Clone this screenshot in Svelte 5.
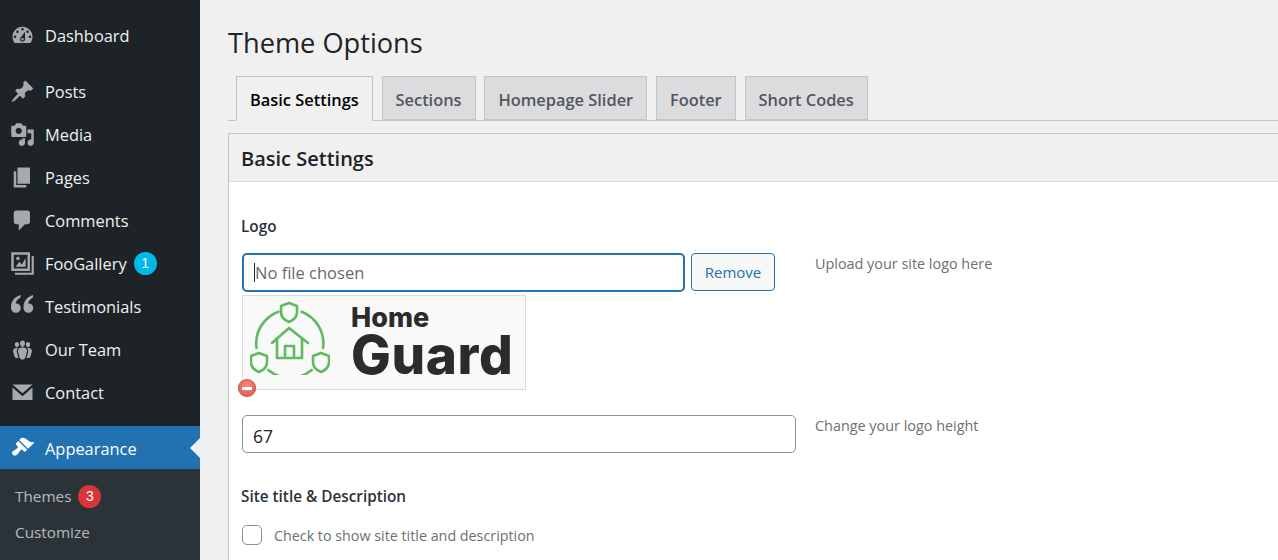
<script>
  const icons = {
    dashboard: "M3.76 16h12.48c1.1-1.37 1.76-3.11 1.76-5 0-4.42-3.58-8-8-8s-8 3.58-8 8c0 1.89.66 3.63 1.76 5zM10 4c.55 0 1 .45 1 1s-.45 1-1 1-1-.45-1-1 .45-1 1-1zM6 6c.55 0 1 .45 1 1s-.45 1-1 1-1-.45-1-1 .45-1 1-1zm8 0c.55 0 1 .45 1 1s-.45 1-1 1-1-.45-1-1 .45-1 1-1zm-5.37 5.55L12 7v6c0 1.1-.9 2-2 2s-2-.9-2-2c0-.57.24-1.08.63-1.45zM4 10c.55 0 1 .45 1 1s-.45 1-1 1-1-.45-1-1 .45-1 1-1zm12 0c.55 0 1 .45 1 1s-.45 1-1 1-1-.45-1-1 .45-1 1-1zm-5 3c0-.55-.45-1-1-1s-1 .45-1 1 .45 1 1 1 1-.45 1-1z",
    posts: "M10.44 3.02l1.82-1.82 6.36 6.35-1.83 1.82c-1.05-.68-2.48-.57-3.41.36l-.75.75c-.92.93-1.04 2.35-.35 3.41l-1.83 1.82-2.41-2.41-2.8 2.79c-.42.42-3.38 2.71-3.8 2.29s1.86-3.39 2.28-3.81l2.79-2.79L4.1 9.36l1.83-1.82c1.05.69 2.48.57 3.4-.36l.75-.75c.93-.92 1.05-2.35.36-3.41z",
    media: "M13 11V4c0-.55-.45-1-1-1h-1.67L9 1H5L3.67 3H2c-.55 0-1 .45-1 1v7c0 .55.45 1 1 1h10c.55 0 1-.45 1-1zM7 4.5c1.38 0 2.5 1.12 2.5 2.5S8.38 9.5 7 9.5 4.5 8.38 4.5 7 5.62 4.5 7 4.5zM14 6h5v10.5c0 1.38-1.12 2.5-2.5 2.5S14 17.88 14 16.5s1.12-2.5 2.5-2.5c.17 0 .34.02.5.05V9h-3V6zm-4 8.05V13h2v3.5c0 1.38-1.12 2.5-2.5 2.5S7 17.88 7 16.5 8.12 14 9.5 14c.17 0 .34.02.5.05z",
    pages: "M6 15V2h10v13H6zm-1 1h8v2H3V5h2v11z",
    comments: "M5 2h9c1.1 0 2 .9 2 2v7c0 1.1-.9 2-2 2h-2l-5 5v-5H5c-1.1 0-2-.9-2-2V4c0-1.1.9-2 2-2z",
    gallery: "M1 1h15v15H1V1zm2 2v11h11V3H3zM4.500 12.500l3-4 2 2.200 3-5.200v7H4.500zM6.300 4.500a1.400 1.400 0 1 1 0 2.800 1.400 1.400 0 0 1 0-2.800zM17.300 4H19v15H4v-1.700h13.300V4z",
    quotes: "M8.500.8C4 2 .8 5.500.8 10.500c0 2.800 1.800 4.500 4 4.500 2.200 0 3.800-1.700 3.800-3.800 0-2.100-1.500-3.600-3.400-3.600-.3 0-.6 0-.8.1.5-2.300 1.900-3.800 4-4.900zM18.500.8C14 2 10.800 5.500 10.800 10.500c0 2.800 1.800 4.500 4 4.500 2.200 0 3.800-1.700 3.800-3.800 0-2.100-1.500-3.600-3.400-3.600-.3 0-.6 0-.8.1.5-2.300 1.900-3.800 4-4.900z",
    team: "M8.03 4.46c-.29 1.28.55 3.46 1.97 3.46 1.41 0 2.25-2.18 1.96-3.46-.22-.98-1.08-1.63-1.96-1.63-.89 0-1.74.65-1.97 1.63zm-4.13.9c-.25 1.08.47 2.93 1.67 2.93s1.92-1.85 1.67-2.93c-.19-.83-.92-1.39-1.67-1.39s-1.48.56-1.67 1.39zm8.86 0c-.25 1.08.47 2.93 1.66 2.93 1.2 0 1.92-1.85 1.67-2.93-.19-.83-.92-1.39-1.67-1.39-.74 0-1.47.56-1.66 1.39zm-.59 11.43l1.25-4.3C14.2 10 12.71 8.47 10 8.47c-2.72 0-4.21 1.53-3.44 4.02l1.26 4.3C8.05 17.51 9 18 10 18c.98 0 1.94-.49 2.17-1.21zm-6.1-7.63c-.49.67-.96 1.83-.42 3.59l1.12 3.79c-.34.2-.77.31-1.2.31-.85 0-1.65-.41-1.85-1.03l-1.07-3.65c-.65-2.11.61-3.4 2.92-3.4.27 0 .54.02.79.06-.1.1-.2.22-.29.33zm8.35-.39c2.31 0 3.58 1.29 2.92 3.4l-1.07 3.65c-.2.62-1 1.03-1.85 1.03-.43 0-.86-.11-1.2-.31l1.11-3.77c.55-1.78.08-2.94-.42-3.61-.08-.11-.18-.23-.28-.33.25-.04.51-.06.79-.06z",
    contact: "M2 3.500h16L10 10.500 2 3.500zm0 2.500v10h16V6l-8 7-8-7z",
    appearance: "M14.48 11.06L7.41 3.99l1.5-1.5c.5-.56 2.3-.47 3.51.32 1.21.8 1.43 1.28 2.91 2.1 1.18.64 2.45 1.26 4.45.85zm-.71.71L6.7 4.7 4.93 6.47c-.39.39-.39 1.02 0 1.41l1.06 1.06c.39.39.39 1.03 0 1.42-.6.6-1.43 1.11-2.21 1.69-.35.26-.7.53-1.01.84C1.43 13.23.98 14.4 2.27 15.7c1.29 1.3 2.52.86 3.85-.45.31-.31.58-.66.84-1.01.58-.78 1.09-1.61 1.69-2.21.39-.39 1.03-.39 1.42 0l1.06 1.06c.39.39 1.02.39 1.41 0z"
  };

  const menu = [
    [{ label: "Dashboard", icon: "dashboard" }],
    [
      { label: "Posts", icon: "posts" },
      { label: "Media", icon: "media" },
      { label: "Pages", icon: "pages" },
      { label: "Comments", icon: "comments" },
      { label: "FooGallery", icon: "gallery", badge: 1 },
      { label: "Testimonials", icon: "quotes" },
      { label: "Our Team", icon: "team" },
      { label: "Contact", icon: "contact" }
    ]
  ];

  const tabs = ["Basic Settings", "Sections", "Homepage Slider", "Footer", "Short Codes"];
  const shield = "l8 3v6c0 5-3 8-8 10-5-2-8-5-8-10V";
</script>

<div class="page">
  <aside>
    {#each menu as group}
      <ul>
        {#each group as item}
          <li>
            <svg viewBox="0 0 20 20"><path d={icons[item.icon]} /></svg>
            <span>{item.label}</span>
            {#if item.badge}<b class="count blue">{item.badge}</b>{/if}
          </li>
        {/each}
      </ul>
    {/each}
    <div class="current">
      <svg viewBox="0 0 20 20"><path d={icons.appearance} /></svg>
      <span>Appearance</span>
    </div>
    <ul class="sub">
      <li><span>Themes</span><b class="count red">3</b></li>
      <li>Customize</li>
    </ul>
  </aside>

  <main>
    <h1>Theme Options</h1>
    <nav>
      {#each tabs as tab, i}
        <div class="tab" class:active={i === 0}>{tab}</div>
      {/each}
    </nav>

    <section class="card">
      <h2>Basic Settings</h2>
      <div class="body">
        <h4>Logo</h4>
        <div class="row">
          <div class="field">
            <div class="upload">
              <div class="file"><i></i>No file chosen</div>
              <button>Remove</button>
            </div>
            <div class="preview">
              <svg class="emblem" viewBox="0 0 80 74" fill="none" stroke="#5fba5f" stroke-width="2.600" stroke-linecap="round" stroke-linejoin="round">
                <path d="M51.700 10.700A34 34 0 0 1 73 47M61.700 69A34 34 0 0 1 18.300 69M6.500 47A34 34 0 0 1 28.300 10.700" />
                <path d={"M39 2" + shield + "5z"} />
                <path d={"M9 52" + shield + "55z"} />
                <path d={"M71 52" + shield + "55z"} />
                <path d="M22 42l17-15 19 15M27 38v19h25V38M35 57V45h9v12" />
              </svg>
              <div class="brand">
                <span class="home">Home</span>
                <span class="guard">Guard</span>
              </div>
              <span class="del"></span>
            </div>
          </div>
          <p>Upload your site logo here</p>
        </div>

        <div class="row height">
          <div class="number">67</div>
          <p>Change your logo height</p>
        </div>

        <h4 class="site">Site title &amp; Description</h4>
        <label><span class="check"></span>Check to show site title and description</label>
      </div>
    </section>
  </main>
</div>

<style>
  :global(body) {
    margin: 0;
    overflow: hidden;
    background: #f0f0f1;
  }

  .page {
    display: flex;
    width: 1278px;
    height: 560px;
    overflow: hidden;
    font-family: "Open Sans", "Noto Sans", sans-serif;
    color: #1d2327;
  }

  aside {
    flex: 0 0 200px;
    background: #1d2327;
    padding-top: 14px;
    color: #f0f0f1;
    font-size: 16.400px;
  }

  ul {
    list-style: none;
    margin: 0 0 13px;
    padding: 0;
  }

  ul + ul {
    margin-bottom: 12px;
  }

  li,
  .current {
    display: flex;
    align-items: center;
    height: 43px;
    padding-left: 10px;
  }

  aside svg {
    flex: none;
    width: 25px;
    height: 25px;
    margin-right: 10px;
    fill: #a7aaad;
    fill-rule: evenodd;
  }

  .count {
    display: inline-block;
    width: 23px;
    height: 23px;
    margin-left: 7px;
    border-radius: 50%;
    color: #fff;
    font: 400 14px/23px "Liberation Sans", sans-serif;
    text-align: center;
  }

  .blue {
    background: #00b9eb;
  }

  .red {
    background: #d63638;
  }

  .current {
    position: relative;
    background: #2271b1;
    color: #fff;
  }

  .current span {
    padding-top: 2px;
  }

  .current svg {
    fill: #fff;
  }

  .current::after {
    content: "";
    position: absolute;
    right: 0;
    top: 12px;
    border: 10px solid transparent;
    border-right-color: #f0f0f1;
    border-left: 0;
  }

  ul.sub {
    margin: 0;
    padding: 9px 0;
    background: #2c3338;
    height: 91px;
    box-sizing: border-box;
    color: rgba(240, 246, 252, 0.7);
    font-size: 15.300px;
  }

  .sub li {
    height: 36px;
    padding-left: 15px;
  }

  main {
    flex: 1;
    min-width: 0;
    padding-left: 28px;
  }

  h1 {
    margin: 24px 0 15px;
    font-size: 27.200px;
    font-weight: 400;
    line-height: 37px;
  }

  nav {
    display: flex;
    gap: 8.800px;
    height: 44px;
    padding-left: 8px;
    border-bottom: 1px solid #c3c4c7;
  }

  .tab {
    box-sizing: border-box;
    padding: 0 13px;
    height: 44px;
    border: 1px solid #c3c4c7;
    background: #dcdcde;
    color: #50575e;
    font-size: 16.400px;
    font-weight: 600;
    line-height: 45px;
  }

  .tab.active {
    height: 45px;
    background: #f0f0f1;
    border-bottom-color: #f0f0f1;
    color: #000;
  }

  .card {
    width: 1100px;
    height: 460px;
    margin-top: 12px;
    border: 1px solid #c3c4c7;
    background: #fff;
  }

  h2 {
    margin: 0;
    height: 47px;
    padding-left: 12px;
    border-bottom: 1px solid #dcdcde;
    background: #f0f0f1;
    font-size: 20px;
    font-weight: 600;
    line-height: 49px;
  }

  .body {
    padding: 0 13px;
  }

  h4 {
    margin: 0 0 0 -1px;
    padding-top: 34px;
    font-size: 15.300px;
    font-weight: 600;
    line-height: 20px;
    color: #2c3338;
  }

  .row {
    display: flex;
    align-items: flex-start;
    margin-top: 17px;
  }

  .field {
    flex: 0 0 573px;
  }

  .row p {
    margin: 0;
    padding-top: 1px;
    font-size: 14.400px;
    line-height: 20px;
    color: #6b7075;
  }

  .upload {
    display: flex;
    gap: 6px;
  }

  .file {
    flex: 0 0 443px;
    height: 39px;
    box-sizing: border-box;
    display: flex;
    align-items: center;
    padding-left: 10px;
    border: 2px solid #2271b1;
    border-radius: 5px;
    background: #fff;
    color: #646970;
    font-size: 16.500px;
  }

  .file i {
    width: 1px;
    height: 19px;
    background: #1d2327;
  }

  button {
    width: 84px;
    height: 38px;
    padding: 0;
    border: 1px solid #2271b1;
    border-radius: 4px;
    background: #f6f7f7;
    color: #2271b1;
    font: inherit;
    font-size: 15px;
  }

  .preview {
    position: relative;
    box-sizing: border-box;
    display: flex;
    align-items: center;
    width: 284px;
    height: 95px;
    margin-top: 3px;
    padding-left: 7px;
    border: 1px solid #dcdcde;
    background: #f9f9f9;
  }

  .emblem {
    width: 80px;
    height: 74px;
    flex: none;
    margin-bottom: 9px;
  }

  .brand {
    display: flex;
    flex-direction: column;
    margin-left: 21px;
    color: #2b2b2b;
    font-family: Inter, sans-serif;
    font-weight: 800;
  }

  .home {
    font-size: 27px;
    line-height: 26px;
  }

  .guard {
    font-size: 53px;
    line-height: 49px;
    letter-spacing: 0.6px;
  }

  .del {
    position: absolute;
    left: -5px;
    bottom: -8px;
    width: 18px;
    height: 18px;
    border-radius: 50%;
    background: radial-gradient(circle at 50% 35%, #f08a7e, #dd4f45);
    box-shadow: inset 0 0 0 1px #d0635a;
  }

  .del::after {
    content: "";
    position: absolute;
    left: 4px;
    top: 7.500px;
    width: 10px;
    height: 3px;
    background: #fff;
  }

  .row.height {
    margin-top: 25px;
  }

  .number {
    flex: 0 0 554px;
    box-sizing: border-box;
    height: 38px;
    margin-right: 19px;
    padding-left: 10px;
    border: 1px solid #8c8f94;
    border-radius: 5px;
    background: #fff;
    font-size: 17.500px;
    line-height: 40px;
  }

  .site {
    padding-top: 33px;
  }

  label {
    display: flex;
    align-items: center;
    margin-top: 19px;
    color: #6b7075;
    font-size: 14.300px;
  }

  .check {
    width: 18px;
    height: 18px;
    margin-right: 12px;
    border: 1px solid #8c8f94;
    border-radius: 5px;
    background: #fff;
  }
</style>
